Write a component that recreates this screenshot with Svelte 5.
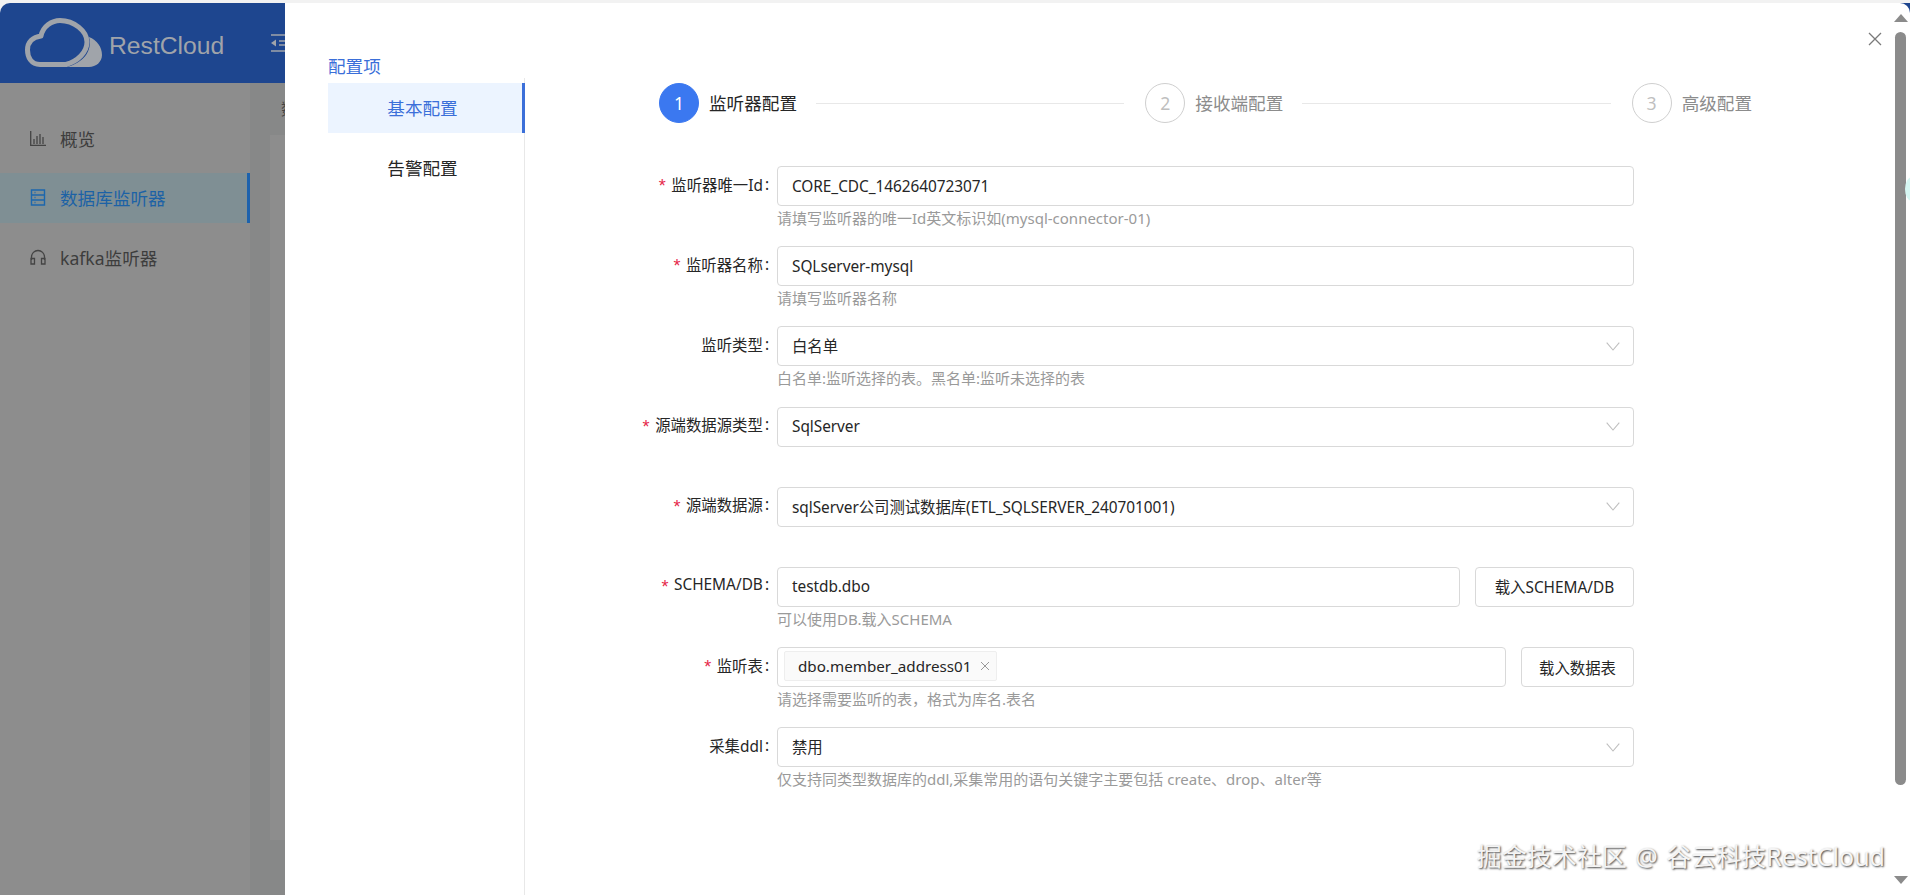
<script>
	// config drawer over the dimmed listener admin page
	const fields = [
		{ label: '监听器唯一Id', required: true, value: 'CORE_CDC_1462640723071', hint: '请填写监听器的唯一Id英文标识如(mysql-connector-01)' },
		{ label: '监听器名称', required: true, value: 'SQLserver-mysql', hint: '请填写监听器名称' },
		{ label: '监听类型', value: '白名单', select: true, cjk: true, hint: '白名单:监听选择的表。黑名单:监听未选择的表' },
		{ label: '源端数据源类型', required: true, value: 'SqlServer', select: true },
		{ label: '源端数据源', required: true, value: 'sqlServer公司测试数据库(ETL_SQLSERVER_240701001)', select: true },
		{ label: 'SCHEMA/DB', required: true, value: 'testdb.dbo', button: '载入SCHEMA/DB', buttonWidth: 159, hint: '可以使用DB.载入SCHEMA' },
		{ label: '监听表', required: true, tag: 'dbo.member_address01', button: '载入数据表', buttonWidth: 113, hint: '请选择需要监听的表，格式为库名.表名' },
		{ label: '采集ddl', value: '禁用', select: true, cjk: true, hint: '仅支持同类型数据库的ddl,采集常用的语句关键字主要包括 create、drop、alter等' }
	]

	const steps = [
		{ n: 1, title: '监听器配置', active: true },
		{ n: 2, title: '接收端配置' },
		{ n: 3, title: '高级配置' }
	]
</script>

<div class="page">
	<header class="topbar">
		<svg class="logo" width="78" height="52" viewBox="25 17 78 52">
			<path d="M40 64.500C31 64.500 27.500 57 27.500 50C27.500 42 33 37 41 36C43 26 52 20.500 60 20.500C74 20.500 87 31 87 42C87 52 78 61 66 64.500Z" fill="none" stroke="#a0a4aa" stroke-width="5" stroke-linejoin="round" />
			<path d="M89 37C97 40 102 47 102 55C102 62 96 67 89 67L67 67C82 63 93 52 89 37Z" fill="#a0a4aa" />
		</svg>
		<span class="brand">RestCloud</span>
		<svg class="fold" width="20" height="18" viewBox="0 0 20 18">
			<path d="M0 1H20M8 7H20M8 11H20M0 17H20" stroke="#a0a4aa" stroke-width="1.500" fill="none" />
			<path d="M0 9L5 5.500V12.500Z" fill="#a0a4aa" />
		</svg>
	</header>

	<div class="under">
		<nav class="side">
			<div class="sideItem">
				<svg width="16" height="15" viewBox="0 0 16 15"><path d="M.7 0V14.300H16M4 13V8M7 13V5M10 13V3M13 13V6" fill="none" stroke="#444" stroke-width="1.300" /></svg>
				<span>概览</span>
			</div>
			<div class="sideItem on">
				<svg width="16" height="17" viewBox="0 0 15 17"><path d="M1 1H14V16H1ZM1 6H14M1 11H14M4 3.500H5M4 8.500H5M4 13.500H5" fill="none" stroke="#1c67ad" stroke-width="1.400" /></svg>
				<span>数据库监听器</span>
			</div>
			<div class="sideItem">
				<svg width="16" height="16" viewBox="0 0 16 16"><path d="M1.500 11V8A6.500 6.500 0 0 1 14.500 8V11M1 9.500H4.500V15H1ZM11.500 9.500H15V15H11.500Z" fill="none" stroke="#444" stroke-width="1.300" /></svg>
				<span>kafka监听器</span>
			</div>
		</nav>
		<main class="behind">
			<div class="crumb">数</div>
			<div class="card"></div>
		</main>
	</div>

	<aside class="drawer">
		<div class="nav">
			<div class="navTitle">配置项</div>
			<ul class="menu">
				<li class="current">基本配置</li>
				<li>告警配置</li>
			</ul>
		</div>

		<div class="content">
			<div class="steps">
				{#each steps as s}
					<div class="step" class:active={s.active}>
						<span class="dot">{s.n}</span>
						<span class="stepTitle">{s.title}</span>
						{#if s.n < 3}<span class="tail"></span>{/if}
					</div>
				{/each}
			</div>

			<form class="form">
				{#each fields as f}
					<div class="row">
						<div class="label">
							{#if f.required}<span class="star">*</span>{/if}
							<span>{f.label}</span><span class="colon">:</span>
						</div>
						<div class="control">
							<div class="line">
								<div class="box">
									{#if f.tag}
										<span class="tag">{f.tag}
											<svg width="10" height="10" viewBox="0 0 10 10"><path d="M1 1L9 9M9 1L1 9" stroke="#999" stroke-width="1" /></svg>
										</span>
									{:else}
										<span class="val" class:cjk={f.cjk}>{f.value}</span>
									{/if}
									{#if f.select}
										<svg class="arrow" width="14" height="9" viewBox="0 0 14 9"><path d="M.7 .7L7 8L13.300 .7" fill="none" stroke="#bfbfbf" stroke-width="1.100" /></svg>
									{/if}
								</div>
								{#if f.button}<button type="button" class="btn" style="width: {f.buttonWidth}px">{f.button}</button>{/if}
							</div>
							{#if f.hint}<div class="hint">{f.hint}</div>{/if}
						</div>
					</div>
				{/each}
			</form>
		</div>

		<svg class="close" width="14" height="14" viewBox="0 0 14 14"><path d="M1 1L13 13M13 1L1 13" stroke="#7a7a7a" stroke-width="1.300" /></svg>

		<div class="scrollbar">
			<i class="up"></i>
			<i class="thumb"></i>
			<i class="down"></i>
		</div>
		<div class="glow"></div>
		<div class="mark">掘金技术社区 @ 谷云科技RestCloud</div>
	</aside>
</div>

<style>
	:global(body) {
		margin: 0;
		background: #fff;
	}

	.page {
		position: relative;
		width: 1910px;
		height: 895px;
		overflow: hidden;
		padding-top: 3px;
		box-sizing: border-box;
		font-family: "Noto Sans", "Noto Sans CJK SC", sans-serif;
		font-size: 15.4px;
		color: #262626;
		background: #f2f2f2;
	}

	.topbar {
		height: 80px;
		display: flex;
		align-items: center;
		background: #1e468f;
		border-top-left-radius: 10px;
	}

	.logo {
		margin-left: 25px;
		margin-top: -1px;
		flex-shrink: 0;
	}

	.brand {
		margin-left: 6px;
		margin-top: 6px;
		font-family: "Liberation Sans", sans-serif;
		font-size: 24.700px;
		color: #a0a4aa;
	}

	.fold {
		margin-left: 47px;
		margin-top: -1px;
	}

	.under {
		display: flex;
		height: 812px;
	}

	.side {
		width: 250px;
		padding-top: 30px;
		box-sizing: border-box;
		background: #8d8d8d;
		display: flex;
		flex-direction: column;
		gap: 9.500px;
		flex-shrink: 0;
	}

	.sideItem {
		height: 50px;
		display: flex;
		align-items: center;
		gap: 14px;
		padding-left: 30px;
		font-size: 17.6px;
		color: #3d3d3d;
		box-sizing: border-box;
	}

	.sideItem.on {
		background: #7f8f94;
		color: #1c62a6;
		border-right: 3px solid #1c62ad;
	}

	.behind {
		flex: 1;
		background: #878888;
		padding: 18px 0 0 20px;
	}

	.crumb {
		height: 34px;
		margin-left: 11px;
		font-size: 15.4px;
		color: #444;
		line-height: 18px;
	}

	.card {
		height: 705px;
		background: #8d8d8d;
	}

	.drawer {
		position: absolute;
		left: 285px;
		top: 3px;
		right: 0;
		bottom: 0;
		display: flex;
		background: #fff;
		border-top-right-radius: 10px;
	}

	.nav {
		width: 240px;
		padding: 52px 0 0 43px;
		box-sizing: border-box;
		display: flex;
		flex-direction: column;
		flex-shrink: 0;
	}

	.navTitle {
		height: 23px;
		line-height: 22px;
		font-size: 17.6px;
		color: #3b6fd9;
	}

	.menu {
		flex: 1;
		list-style: none;
		margin: 0;
		padding: 5px 0 0;
		border-right: 1px solid #e8e8e8;
	}

	.menu li {
		height: 50px;
		line-height: 50px;
		margin-bottom: 10px;
		padding-right: 7px;
		text-align: center;
		font-size: 17.6px;
		color: #262626;
		box-sizing: border-box;
	}

	.menu li.current {
		background: #ecf4ff;
		color: #3b6fd9;
		border-right: 3px solid #3b6fd9;
		margin-right: -1px;
		padding-right: 5px;
	}

	.content {
		flex: 1;
		min-width: 0;
		padding-top: 80px;
	}

	.steps {
		display: flex;
		margin-left: 134px;
		width: 1093px;
	}

	.step {
		flex: 1;
		display: flex;
		align-items: center;
		margin-right: 21px;
		height: 40px;
	}

	.step:last-child {
		flex: none;
		margin-right: 0;
	}

	.dot {
		width: 40px;
		height: 40px;
		flex-shrink: 0;
		box-sizing: border-box;
		border: 1px solid #cfcfcf;
		border-radius: 50%;
		display: flex;
		align-items: center;
		justify-content: center;
		font-size: 17.6px;
		color: #bfbfbf;
	}

	.stepTitle {
		margin-left: 10px;
		margin-top: -1px;
		font-size: 17.6px;
		color: #8c8c8c;
		white-space: nowrap;
	}

	.tail {
		flex: 1;
		height: 1px;
		margin-left: 19px;
		background: #e8e8e8;
	}

	.active .dot {
		background: #3b78f0;
		border-color: #3b78f0;
		color: #fff;
	}

	.active .stepTitle {
		color: #262626;
	}

	.form {
		margin: 43px 0 0 105px;
		width: 1004px;
	}

	.row {
		display: flex;
		height: 80.2px;
	}

	.label {
		width: 139px;
		height: 36px;
		flex-shrink: 0;
		margin-right: 8px;
		display: flex;
		justify-content: flex-end;
		align-items: center;
		color: #262626;
		white-space: nowrap;
	}

	.star {
		color: #e6294b;
		margin-right: 5.500px;
		font-size: 18px;
		line-height: 18px;
		padding-top: 4px;
		font-family: "Liberation Sans", sans-serif;
	}

	.colon {
		margin: 0 0 0 2px;
	}

	.control {
		flex: 1;
		min-width: 0;
	}

	.line {
		display: flex;
		gap: 15px;
	}

	.box {
		flex: 1;
		height: 40px;
		box-sizing: border-box;
		border: 1px solid #d9d9d9;
		border-radius: 4px;
		padding: 0 14px;
		display: flex;
		align-items: center;
		justify-content: space-between;
		background: #fff;
	}

	.val {
		color: #262626;
		letter-spacing: -0.05px;
	}

	.val.cjk {
		margin-top: -2px;
	}

	.tag {
		margin: -2px 0 0 -8px;
		height: 30px;
		box-sizing: border-box;
		padding: 0 6px 0 13px;
		display: inline-flex;
		align-items: center;
		gap: 8px;
		font-size: 15.2px;
		background: #fafafa;
		border: 1px solid #eee;
		border-radius: 2px;
	}

	.arrow {
		margin-right: -1px;
		flex-shrink: 0;
	}

	.btn {
		height: 40px;
		padding: 0;
		box-sizing: border-box;
		border: 1px solid #d9d9d9;
		border-radius: 4px;
		background: #fff;
		font: inherit;
		color: #262626;
		flex-shrink: 0;
	}

	.hint {
		margin-top: 1px;
		line-height: 22px;
		font-size: 15px;
		color: #9a9a9a;
		white-space: nowrap;
	}

	.close {
		position: absolute;
		left: 1583px;
		top: 29px;
	}

	.scrollbar i {
		position: absolute;
		display: block;
	}

	.thumb {
		left: 1610px;
		top: 29px;
		width: 11px;
		height: 753px;
		border-radius: 6px;
		background: #8b8b8b;
	}

	.up {
		left: 1609px;
		top: 11px;
		border: 7px solid transparent;
		border-top: 0;
		border-bottom: 8px solid #8b8b8b;
	}

	.down {
		left: 1609px;
		top: 873px;
		border: 7px solid transparent;
		border-bottom: 0;
		border-top: 8px solid #8b8b8b;
	}

	.glow {
		position: absolute;
		right: -9px;
		top: 174px;
		width: 14px;
		height: 24px;
		border-radius: 50%;
		background: #d6f7f3;
	}

	.mark {
		position: absolute;
		right: 25px;
		top: 836px;
		font-size: 25px;
		word-spacing: 2px;
		line-height: 34px;
		color: #f4f4f4;
		white-space: nowrap;
		text-shadow: 1px 1px 2px #444;
	}
</style>
